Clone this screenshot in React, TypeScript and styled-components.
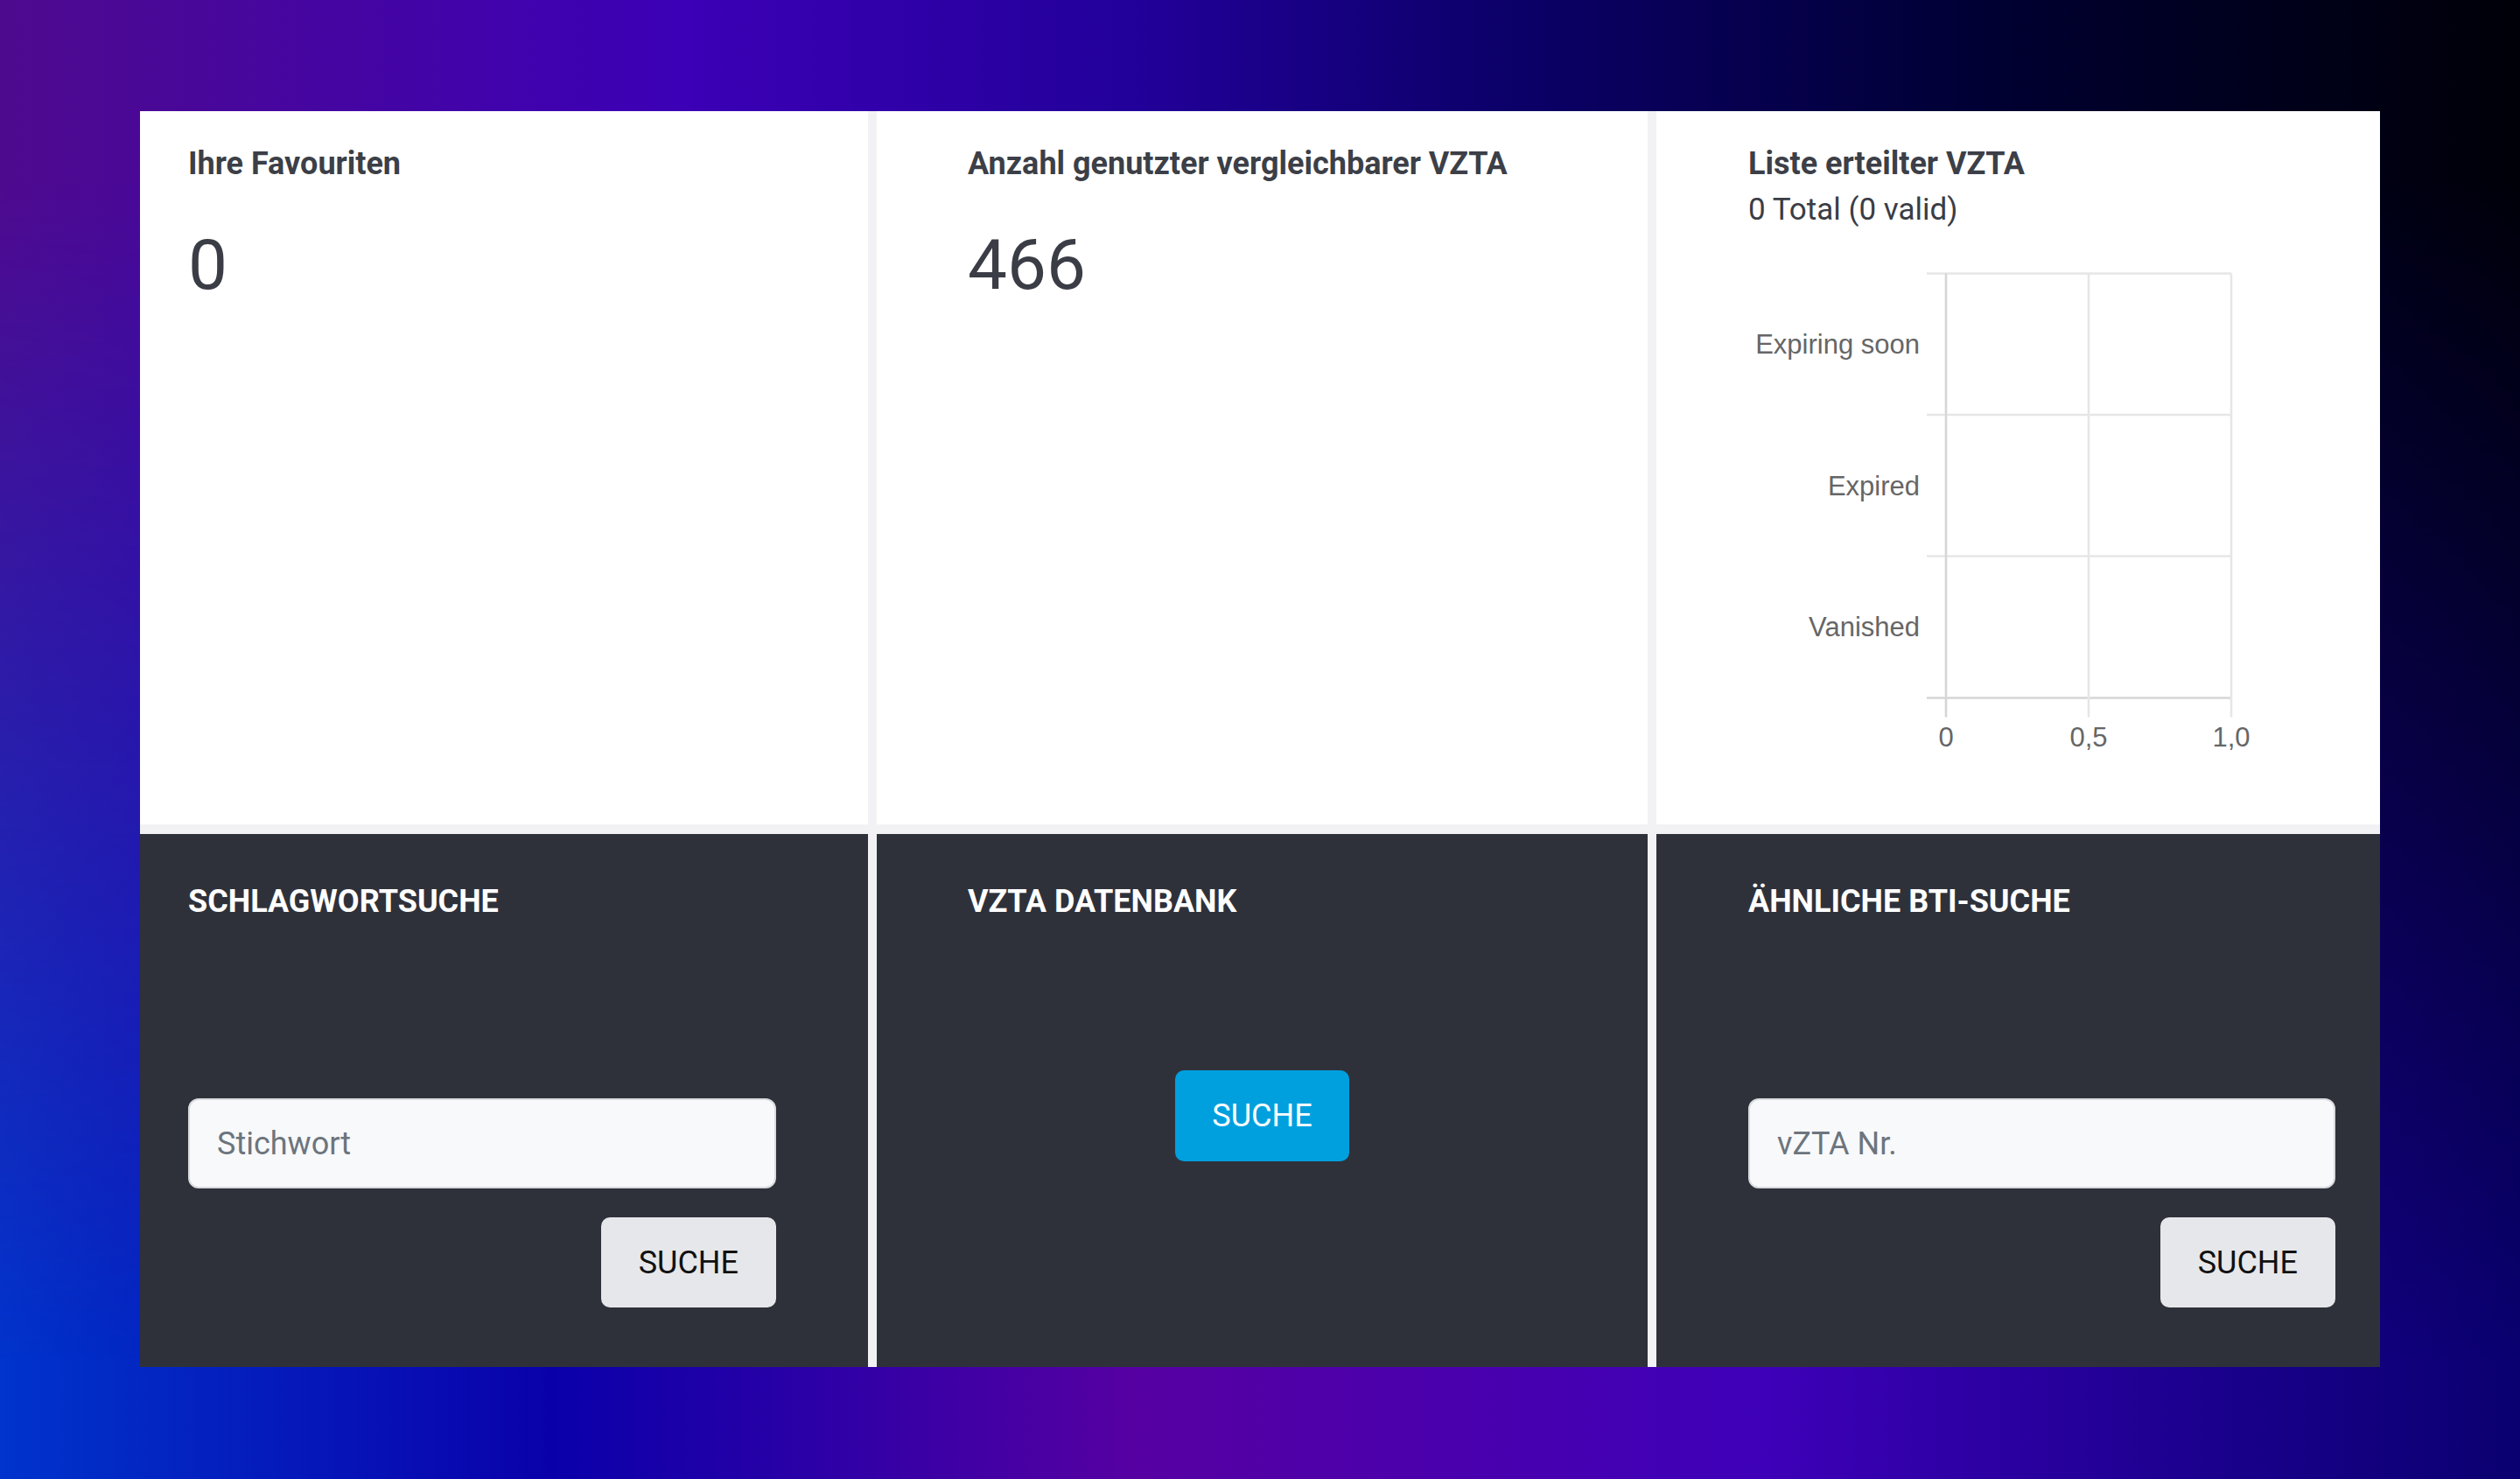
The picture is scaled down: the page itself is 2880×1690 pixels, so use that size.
import React from "react";
import styled, { createGlobalStyle } from "styled-components";

const GlobalStyle = createGlobalStyle`
  html, body { margin: 0; padding: 0; }
  body { font-family: Roboto, "Noto Sans", Arial, sans-serif; }
  *, *::before, *::after { box-sizing: border-box; }
`;

const Page = styled.div`
  position: relative;
  width: 2880px;
  height: 1690px;
  padding: 127px 160px 128px;
  overflow: hidden;
  background: linear-gradient(
    90deg,
    #0034cc 0%,
    #0a00aa 22%,
    #5600a2 45%,
    #3e00b8 70%,
    #1a008c 88%,
    #0a0070 100%
  );
  &::before {
    content: "";
    position: absolute;
    inset: 0;
    background: linear-gradient(
      90deg,
      #4e0a8e 0%,
      #3c00b6 27%,
      #22009a 45%,
      #0b0068 60%,
      #000030 80%,
      #000008 100%
    );
    -webkit-mask-image: linear-gradient(180deg, #000 0%, #000 12%, transparent 92%);
    mask-image: linear-gradient(180deg, #000 0%, #000 12%, transparent 92%);
  }
`;

const Dashboard = styled.main`
  position: relative;
  z-index: 1;
  display: grid;
  grid-template-columns: 832px 881px 827px;
  grid-template-rows: 815px 609px;
  column-gap: 10px;
  row-gap: 11px;
  height: 100%;
  background: #f2f2f4;
`;

const Card = styled.section<{ $dark?: boolean; $pl: number; $pr: number }>`
  display: flex;
  flex-direction: column;
  min-width: 0;
  background: ${(p) => (p.$dark ? "#2f313a" : "#ffffff")};
  padding: ${(p) => (p.$dark ? 56 : 39)}px ${(p) => p.$pr}px 0 ${(p) => p.$pl}px;
`;

const CardTitle = styled.h2<{ $dark?: boolean }>`
  margin: 0;
  font-family: Roboto, Arial, sans-serif;
  font-size: 36px;
  font-weight: 700;
  line-height: 43px;
  color: ${(p) => (p.$dark ? "#ffffff" : "#3c3f47")};
  white-space: nowrap;
`;

const BigNumber = styled.div`
  margin-top: 54px;
  font-family: Roboto, Arial, sans-serif;
  font-size: 80px;
  font-weight: 400;
  line-height: 80px;
  color: #3a3d45;
`;

const SubLine = styled.div`
  margin-top: 5px;
  font-family: Roboto, Arial, sans-serif;
  font-size: 35px;
  line-height: 51px;
  color: #3a3d45;
`;

const ChartSvg = styled.svg`
  display: block;
  margin-top: 35px;
  overflow: visible;
`;

const SearchForm = styled.form`
  display: flex;
  flex-direction: column;
  margin-top: 203px;
`;

const TextInput = styled.input`
  width: 100%;
  height: 103px;
  padding: 0 31px;
  border: 2px solid #d9dbe0;
  border-radius: 12px;
  background: #f8f9fa;
  font-family: Roboto, Arial, sans-serif;
  font-size: 36px;
  color: #333;
  outline: none;
  &::placeholder {
    color: #6c757d;
  }
`;

const Button = styled.button<{ $primary?: boolean }>`
  align-self: ${(p) => (p.$primary ? "center" : "flex-end")};
  margin-top: ${(p) => (p.$primary ? 171 : 33)}px;
  height: ${(p) => (p.$primary ? 104 : 103)}px;
  padding: 0 ${(p) => (p.$primary ? 42 : 43)}px;
  border: none;
  border-radius: 10px;
  background: ${(p) => (p.$primary ? "#00a0df" : "#e6e7ea")};
  color: ${(p) => (p.$primary ? "#ffffff" : "#111111")};
  font-family: Roboto, Arial, sans-serif;
  font-size: 36px;
  font-weight: 400;
  cursor: pointer;
`;

const gridColor = "#e6e6e6";
const axisColor = "#d6d6d6";

const Chart: React.FC = () => {
  const xs = [226, 389, 552];
  const ys = [12.5, 174, 335.5, 497.5];
  const labels = [
    { t: "Expiring soon", y: 93.5 },
    { t: "Expired", y: 255.5 },
    { t: "Vanished", y: 416.5 },
  ];
  const ticks = ["0", "0,5", "1,0"];
  return (
    <ChartSvg width={580} height={570} viewBox="0 0 580 570">
      {ys.map((y, i) => (
        <line
          key={"h" + i}
          x1={204}
          x2={552}
          y1={y}
          y2={y}
          stroke={i === ys.length - 1 ? axisColor : gridColor}
          strokeWidth={2.6}
        />
      ))}
      {xs.map((x, i) => (
        <line
          key={"v" + i}
          x1={x}
          x2={x}
          y1={12.5}
          y2={519.5}
          stroke={i === 0 ? axisColor : gridColor}
          strokeWidth={2.6}
        />
      ))}
      {labels.map((l) => (
        <text
          key={l.t}
          x={196}
          y={l.y}
          textAnchor="end"
          dominantBaseline="central"
          fontFamily='"Liberation Sans", Arial, sans-serif'
          fontSize={31}
          fill="#666666"
        >
          {l.t}
        </text>
      ))}
      {ticks.map((t, i) => (
        <text
          key={t}
          x={xs[i]}
          y={542.5}
          textAnchor="middle"
          dominantBaseline="central"
          fontFamily='"Liberation Sans", Arial, sans-serif'
          fontSize={31}
          fill="#666666"
        >
          {t}
        </text>
      ))}
    </ChartSvg>
  );
};

export default function App() {
  return (
    <>
      <GlobalStyle />
      <Page>
        <Dashboard>
          <Card $pl={55} $pr={105}>
            <CardTitle>Ihre Favouriten</CardTitle>
            <BigNumber>0</BigNumber>
          </Card>
          <Card $pl={104} $pr={40}>
            <CardTitle>Anzahl genutzter vergleichbarer VZTA</CardTitle>
            <BigNumber>466</BigNumber>
          </Card>
          <Card $pl={105} $pr={50}>
            <CardTitle>Liste erteilter VZTA</CardTitle>
            <SubLine>0 Total (0 valid)</SubLine>
            <Chart />
          </Card>

          <Card $dark $pl={55} $pr={105}>
            <CardTitle $dark>SCHLAGWORTSUCHE</CardTitle>
            <SearchForm onSubmit={(e) => e.preventDefault()}>
              <TextInput placeholder="Stichwort" />
              <Button type="submit">SUCHE</Button>
            </SearchForm>
          </Card>
          <Card $dark $pl={104} $pr={104}>
            <CardTitle $dark>VZTA DATENBANK</CardTitle>
            <Button $primary type="button">SUCHE</Button>
          </Card>
          <Card $dark $pl={105} $pr={51}>
            <CardTitle $dark>ÄHNLICHE BTI-SUCHE</CardTitle>
            <SearchForm onSubmit={(e) => e.preventDefault()}>
              <TextInput placeholder="vZTA Nr." />
              <Button type="submit">SUCHE</Button>
            </SearchForm>
          </Card>
        </Dashboard>
      </Page>
    </>
  );
}
